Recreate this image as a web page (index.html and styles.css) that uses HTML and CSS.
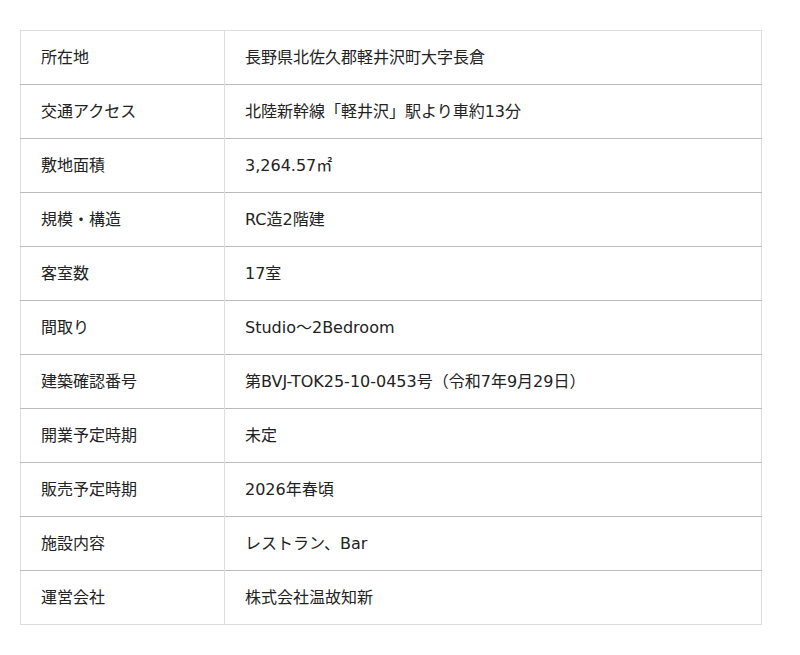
FILE: index.html
```html
<!DOCTYPE html>
<html lang="ja">
<head>
<meta charset="utf-8">
<link rel="stylesheet" href="styles.css">
</head>
<body>
<table class="spec">
<tbody>
<tr><th>所在地</th><td>長野県北佐久郡軽井沢町大字長倉</td></tr>
<tr><th>交通アクセス</th><td>北陸新幹線「軽井沢」駅より車約13分</td></tr>
<tr><th>敷地面積</th><td>3,264.57㎡</td></tr>
<tr><th>規模・構造</th><td>RC造2階建</td></tr>
<tr><th>客室数</th><td>17室</td></tr>
<tr><th>間取り</th><td>Studio～2Bedroom</td></tr>
<tr><th>建築確認番号</th><td>第BVJ-TOK25-10-0453号（令和7年9月29日）</td></tr>
<tr><th>開業予定時期</th><td>未定</td></tr>
<tr><th>販売予定時期</th><td>2026年春頃</td></tr>
<tr><th>施設内容</th><td>レストラン、Bar</td></tr>
<tr><th>運営会社</th><td>株式会社温故知新</td></tr>
</tbody>
</table>
</body>
</html>
```
FILE: styles.css
```css
html, body {
  margin: 0;
  padding: 0;
  background: #fff;
}
body {
  padding: 30px 0 0 20px;
  font-family: "DejaVu Sans", "Noto Sans CJK JP", sans-serif;
  font-size: 16px;
  color: #222;
}
.spec {
  width: 742px;
  border-collapse: collapse;
  border: 1px solid #ddd;
}
.spec tr {
  height: 54px;
}
.spec tr + tr th,
.spec tr + tr td {
  border-top: 1px solid #bbb;
}
.spec th,
.spec td {
  padding: 0 20px;
  text-align: left;
  font-weight: normal;
  vertical-align: middle;
  line-height: 20px;
}
.spec th {
  width: 163px;
  border-right: 1px solid #ddd;
}
```
